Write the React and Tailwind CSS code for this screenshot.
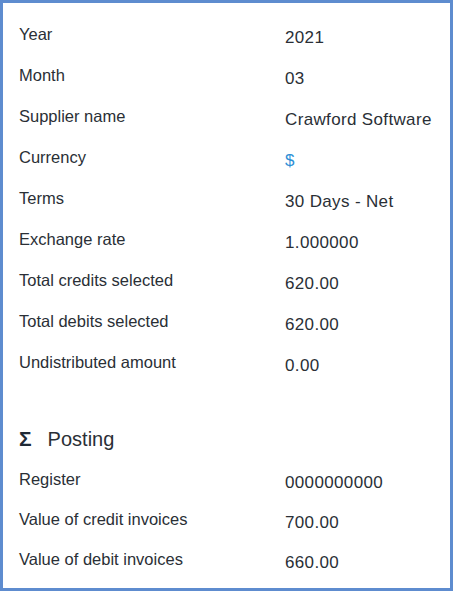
import React from "react";

const rows1 = [
  ["Year", "2021"],
  ["Month", "03"],
  ["Supplier name", "Crawford Software"],
  ["Currency", "$", true],
  ["Terms", "30 Days - Net"],
  ["Exchange rate", "1.000000"],
  ["Total credits selected", "620.00"],
  ["Total debits selected", "620.00"],
  ["Undistributed amount", "0.00"],
];

const rows2 = [
  ["Register", "0000000000"],
  ["Value of credit invoices", "700.00"],
  ["Value of debit invoices", "660.00"],
];

function Row({ label, value, link, h }) {
  return (
    <div className={`flex items-center ${h}`}>
      <div className="w-[266px] text-[16.5px] leading-[18px] text-[#2a2f36]">{label}</div>
      <div
        className={`pt-[8px] text-[17px] leading-[18px] tracking-[0.35px] ${
          link ? "text-[#2e8fd6]" : "text-[#2a2f36]"
        }`}
      >
        {value}
      </div>
    </div>
  );
}

export default function App() {
  return (
    <div
      className="w-[453px] h-[591px] bg-white border-[3px] border-[#5e8ccf] pl-[16px] pt-[10px]"
      style={{ fontFamily: '"Liberation Sans", Arial, sans-serif' }}
    >
      <div className="flex flex-col">
        {rows1.map(([l, v, link]) => (
          <Row key={l} label={l} value={v} link={link} h="h-[41px]" />
        ))}
      </div>
      <div className="h-[36px]" />
      <div className="flex items-center h-[41px] gap-[16px]">
        <span className="text-[21px] font-bold text-[#1f2a36] leading-none">Σ</span>
        <span className="text-[20px] text-[#2a2f36] leading-none">Posting</span>
      </div>
      <div className="flex flex-col">
        {rows2.map(([l, v]) => (
          <Row key={l} label={l} value={v} h="h-[40px]" />
        ))}
      </div>
    </div>
  );
}
